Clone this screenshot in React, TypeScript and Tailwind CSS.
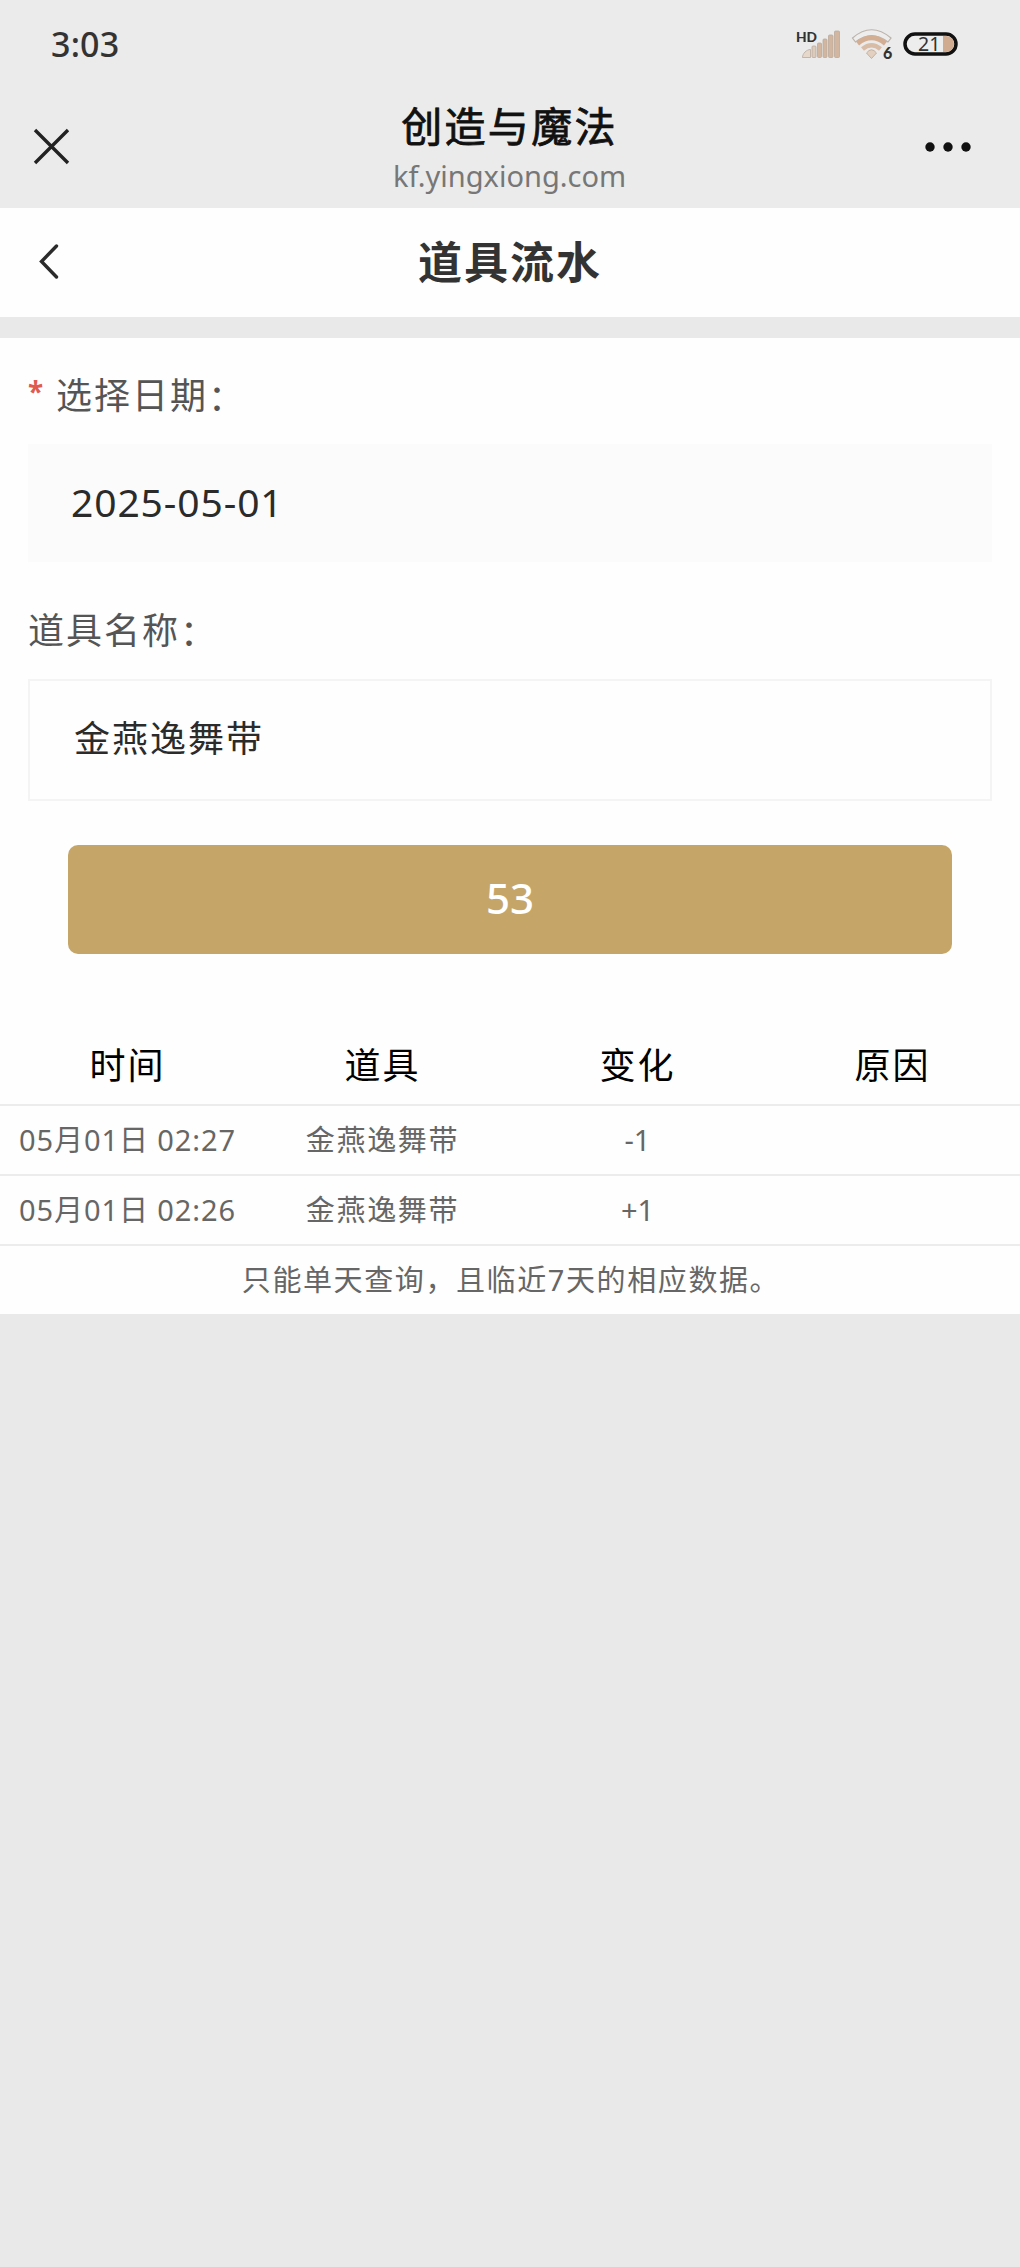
import type { ReactNode } from 'react';

interface Flow {
  time: string;
  item: string;
  change: string;
  reason: string;
}

const COLUMNS = ['时间', '道具', '变化', '原因'];

const FLOWS: Flow[] = [
  { time: '05月01日 02:27', item: '金燕逸舞带', change: '-1', reason: '' },
  { time: '05月01日 02:26', item: '金燕逸舞带', change: '+1', reason: '' },
];

function SignalIcon() {
  return (
    <svg width="46" height="34" viewBox="0 0 46 34" className="font-['Lato','Noto_Sans',sans-serif]">
      <g fill="#d3b6a0" stroke="#b9aa9d" strokeWidth="0.8">
        <path d="M7.5 30.5c0-4 4-8 8-8v8z" fill="#e6d9cc" />
        <rect x="17" y="19" width="4" height="11.5" rx="1" fill="#dccabb" />
        <rect x="22.5" y="16" width="4" height="14.5" rx="1" />
        <rect x="28" y="12" width="4" height="18.5" rx="1" />
        <rect x="33.5" y="8" width="4.5" height="22.5" rx="1" />
        <rect x="39.5" y="4" width="5" height="26.5" rx="1" />
      </g>
      <text x="1" y="14.5" fontSize="14" fontWeight="900" fill="#333" textLength="21" lengthAdjust="spacingAndGlyphs">
        HD
      </text>
    </svg>
  );
}

function WifiIcon() {
  return (
    <svg width="42" height="34" viewBox="0 0 42 34" fill="none" className="font-['Lato','Noto_Sans',sans-serif]">
      <path d="M1.5 11Q20.5 -5.5 40 11L37 15Q20.5 2 4.5 15Z" fill="#ededed" stroke="#bdb4ab" strokeWidth="1.2" />
      <path d="M6.5 16.5Q20.5 5 34.5 16.5" stroke="#d3ae92" strokeWidth="5" />
      <path d="M11.5 22Q20.5 14.5 29.500 22" stroke="#d9bca6" strokeWidth="4.5" />
      <path d="M15.5 26Q20.5 19.5 25.5 26L20.5 31.5Z" fill="#e3d0c0" stroke="#c7b09c" />
      <text x="32" y="31.5" fontSize="16" fontWeight="900" fill="#333">
        6
      </text>
    </svg>
  );
}

function BatteryIcon() {
  return (
    <svg width="56" height="26" viewBox="0 0 56 26" className="font-['Noto_Sans',sans-serif]">
      <rect x="2" y="3" width="51" height="20" rx="10" fill="#ededed" stroke="#111" strokeWidth="3.5" />
      <path d="M40 5h3a8 8 0 0 1 0 16h-3z" fill="#d0ab90" />
      <text x="15" y="20" fontSize="19.5" fill="#333">
        21
      </text>
    </svg>
  );
}

function StatusBar() {
  return (
    <div className="flex h-[88px] items-center justify-between pr-[61px] pl-[51px]">
      <span className="text-[34px] leading-[88px] font-medium tracking-[0.2px] text-[#333]">3:03</span>
      <div className="flex items-center gap-2.5">
        <SignalIcon />
        <WifiIcon />
        <BatteryIcon />
      </div>
    </div>
  );
}

function BrowserBar() {
  return (
    <div className="flex h-[120px] items-start justify-between pr-[48px] pl-[33px]">
      <svg width="37" height="37" viewBox="0 0 37 37" className="mt-10" stroke="#222" strokeWidth="3.4">
        <path d="M2 2L35 35M35 2L2 35" />
      </svg>
      <div className="flex flex-col items-center pl-[25px]">
        <h1 className="mt-2.5 text-[41px] leading-[56px] tracking-[2.3px] text-[#111] [-webkit-text-stroke:0.8px_#111]">
          创造与魔法
        </h1>
        <p className="text-[29px] leading-[44px] text-[#777]">kf.yingxiong.com</p>
      </div>
      <svg width="48" height="12" viewBox="0 0 48 12" className="mt-[53px]" fill="#111">
        <circle cx="6" cy="6" r="4.7" />
        <circle cx="24" cy="6" r="4.7" />
        <circle cx="42" cy="6" r="4.7" />
      </svg>
    </div>
  );
}

function PageTitle() {
  return (
    <div className="flex h-[109px] items-center justify-between bg-[#fefefe] px-[38px]">
      <svg width="22" height="36" viewBox="0 0 22 36" className="mb-1" fill="none" stroke="#2b2b2b" strokeWidth="3.4">
        <path d="M18.5 3L3.5 18.5L18.5 34" strokeLinecap="round" />
      </svg>
      <h2 className="text-[44px] leading-[109px] font-bold tracking-[2px] text-[#333]">道具流水</h2>
      <span className="w-[22px]" />
    </div>
  );
}

function Label({ children, required }: { children: ReactNode; required?: boolean }) {
  return (
    <div className="flex text-[36px] leading-[56px] tracking-[2px] text-[#555]">
      {required && <span className="w-[28px] text-[28px] leading-[46px] font-bold text-[#e05a50]">*</span>}
      <span>{children}</span>
      <span className="translate-y-0.5">：</span>
    </div>
  );
}

function Cell({ children }: { children: ReactNode }) {
  return <div className="text-center whitespace-nowrap">{children}</div>;
}

export default function App() {
  return (
    <div className="min-h-[2267px] bg-[#e9e9e9] font-['Noto_Sans','Noto_Sans_CJK_SC',sans-serif]">
      <header className="bg-[#ebebeb]">
        <StatusBar />
        <BrowserBar />
      </header>
      <PageTitle />

      <main className="mt-[21px] bg-[#fefefe]">
        <form className="flex flex-col px-7 pt-[30px]">
          <Label required>选择日期</Label>
          <div className="mt-5 h-[118px] bg-[#fbfbfb] pl-[43px] text-[39px] leading-[115px] tracking-[0.9px] text-[#2b2b2b]">
            2025-05-01
          </div>
          <div className="mt-[41px]">
            <Label>道具名称</Label>
          </div>
          <div className="mt-5 h-[122px] border-2 border-[#f4f4f4] pl-[44px] text-[36px] leading-[116px] tracking-[2px] text-[#2b2b2b]">
            金燕逸舞带
          </div>
          <button
            type="button"
            className="mx-10 mt-11 h-[109px] rounded-[10px] bg-[#c5a668] pb-1 text-[42px] leading-[105px] font-medium text-white"
          >
            53
          </button>
        </form>

        <section className="mt-[70px] text-[29px] tracking-[1.7px] text-[#666]">
          <div className="grid h-[82px] grid-cols-4 border-b-2 border-[#ececec] text-[36px] leading-[84px] tracking-[2px] text-black">
            {COLUMNS.map((name) => (
              <Cell key={name}>{name}</Cell>
            ))}
          </div>
          {FLOWS.map((flow) => (
            <div key={flow.time} className="grid h-[70px] grid-cols-4 border-b-2 border-[#ececec] leading-[67px]">
              <Cell>
                <span className="tracking-[0.9px]">{flow.time}</span>
              </Cell>
              <Cell>{flow.item}</Cell>
              <Cell>
                <span className="tracking-normal">{flow.change}</span>
              </Cell>
              <Cell>{flow.reason}</Cell>
            </div>
          ))}
          <p className="h-[68px] pl-0.5 text-center leading-[67px] tracking-[1.6px]">
            只能单天查询，且临近7天的相应数据。
          </p>
        </section>
      </main>
    </div>
  );
}
